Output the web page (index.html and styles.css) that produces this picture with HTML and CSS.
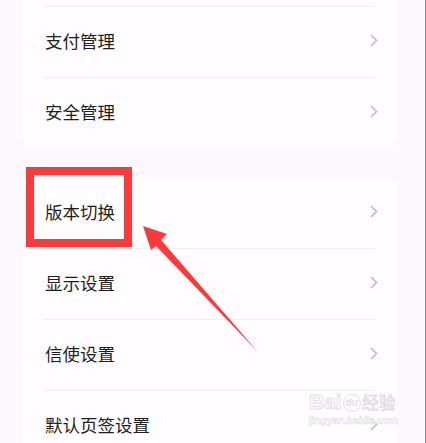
FILE: index.html
```html
<!DOCTYPE html>
<html lang="zh-CN">
<head>
<meta charset="utf-8">
<link rel="stylesheet" href="styles.css">
</head>
<body>
<div class="page">
  <div class="card card-top">
    <div class="row divided"><span class="label">支付管理</span><svg class="chev" viewBox="0 0 8 13"><polyline points="1,1 6.5,6.5 1,12"/></svg></div>
    <div class="row divided"><span class="label">安全管理</span><svg class="chev" viewBox="0 0 8 13"><polyline points="1,1 6.5,6.5 1,12"/></svg></div>
  </div>
  <div class="card card-bottom">
    <div class="row"><span class="label">版本切换</span><svg class="chev" viewBox="0 0 8 13"><polyline points="1,1 6.5,6.5 1,12"/></svg></div>
    <div class="row divided"><span class="label">显示设置</span><svg class="chev" viewBox="0 0 8 13"><polyline points="1,1 6.5,6.5 1,12"/></svg></div>
    <div class="row divided"><span class="label">信使设置</span><svg class="chev" viewBox="0 0 8 13"><polyline points="1,1 6.5,6.5 1,12"/></svg></div>
    <div class="row divided"><span class="label">默认页签设置</span><svg class="chev" viewBox="0 0 8 13"><polyline points="1,1 6.5,6.5 1,12"/></svg></div>
  </div>

  <div class="highlight"></div>
  <svg class="arrow" viewBox="0 0 426 443" width="426" height="443">
    <polygon points="143,226 167,234 161,240 258,352 156,246 151,250"/>
  </svg>

  <div class="watermark">
    <div class="wm-top"><span class="wm-bai">Bai</span><span class="wm-du">du</span><span class="wm-jy">经验</span></div>
    <div class="wm-url">jingyan.baidu.com</div>
  </div>
</div>
</body>
</html>
```
FILE: styles.css
```css
* { box-sizing: border-box; }
html, body {
  margin: 0;
  padding: 0;
  background: #fcf8fc;
}
.page {
  position: relative;
  width: 426px;
  height: 443px;
  overflow: hidden;
  padding: 0 28px 0 22px;
  border-right: 1px solid #8a8a8a;
  font-family: "Noto Sans CJK SC", "Noto Sans", sans-serif;
}
.card {
  background: #fffdff;
  padding: 0 22px;
}
.card-top {
  padding-top: 6px;
  border-radius: 0 0 11px 11px;
}
.card-bottom {
  margin-top: 29px;
  border-radius: 11px 11px 0 0;
}
.row {
  height: 71px;
  padding-bottom: 3px;
  display: flex;
  align-items: center;
  justify-content: space-between;
}
.row.divided {
  border-top: 1px solid #f2eef2;
}
.label {
  font-size: 17.5px;
  color: #1e1e1e;
  padding-left: 1px;
}
.chev {
  width: 8px;
  height: 13px;
  margin-right: -3px;
  fill: none;
  stroke: #bcbcbc;
  stroke-width: 1.6;
}
.highlight {
  position: absolute;
  left: 26px;
  top: 167px;
  width: 106px;
  height: 80px;
  border: 8px solid #fd3a3b;
}
.arrow {
  position: absolute;
  left: 0;
  top: 0;
}
.arrow polygon {
  fill: #fd3a3b;
}
.watermark {
  position: absolute;
  left: 309px;
  top: 390px;
  width: 92px;
  font-family: "Liberation Sans", sans-serif;
}
.wm-top {
  display: flex;
  align-items: flex-end;
  gap: 1px;
  height: 22px;
}
.wm-bai {
  font-size: 21px;
  font-weight: bold;
  line-height: 20px;
  color: #fff;
  -webkit-text-stroke: 1px #e4e0e4;
}
.wm-du {
  display: inline-block;
  width: 18px;
  height: 18px;
  border-radius: 50%;
  border: 1px solid #e4e0e4;
  font-size: 10px;
  line-height: 16px;
  text-align: center;
  color: #e4e0e4;
  font-weight: bold;
}
.wm-jy {
  font-family: "Noto Sans CJK SC", sans-serif;
  font-size: 17px;
  line-height: 20px;
  color: #fff;
  -webkit-text-stroke: 1px #e4e0e4;
}
.wm-url {
  font-size: 10.5px;
  line-height: 13px;
  font-weight: bold;
  color: #fff;
  -webkit-text-stroke: 0.6px #e4e0e4;
  margin-top: 2px;
  letter-spacing: -0.2px;
}
```
